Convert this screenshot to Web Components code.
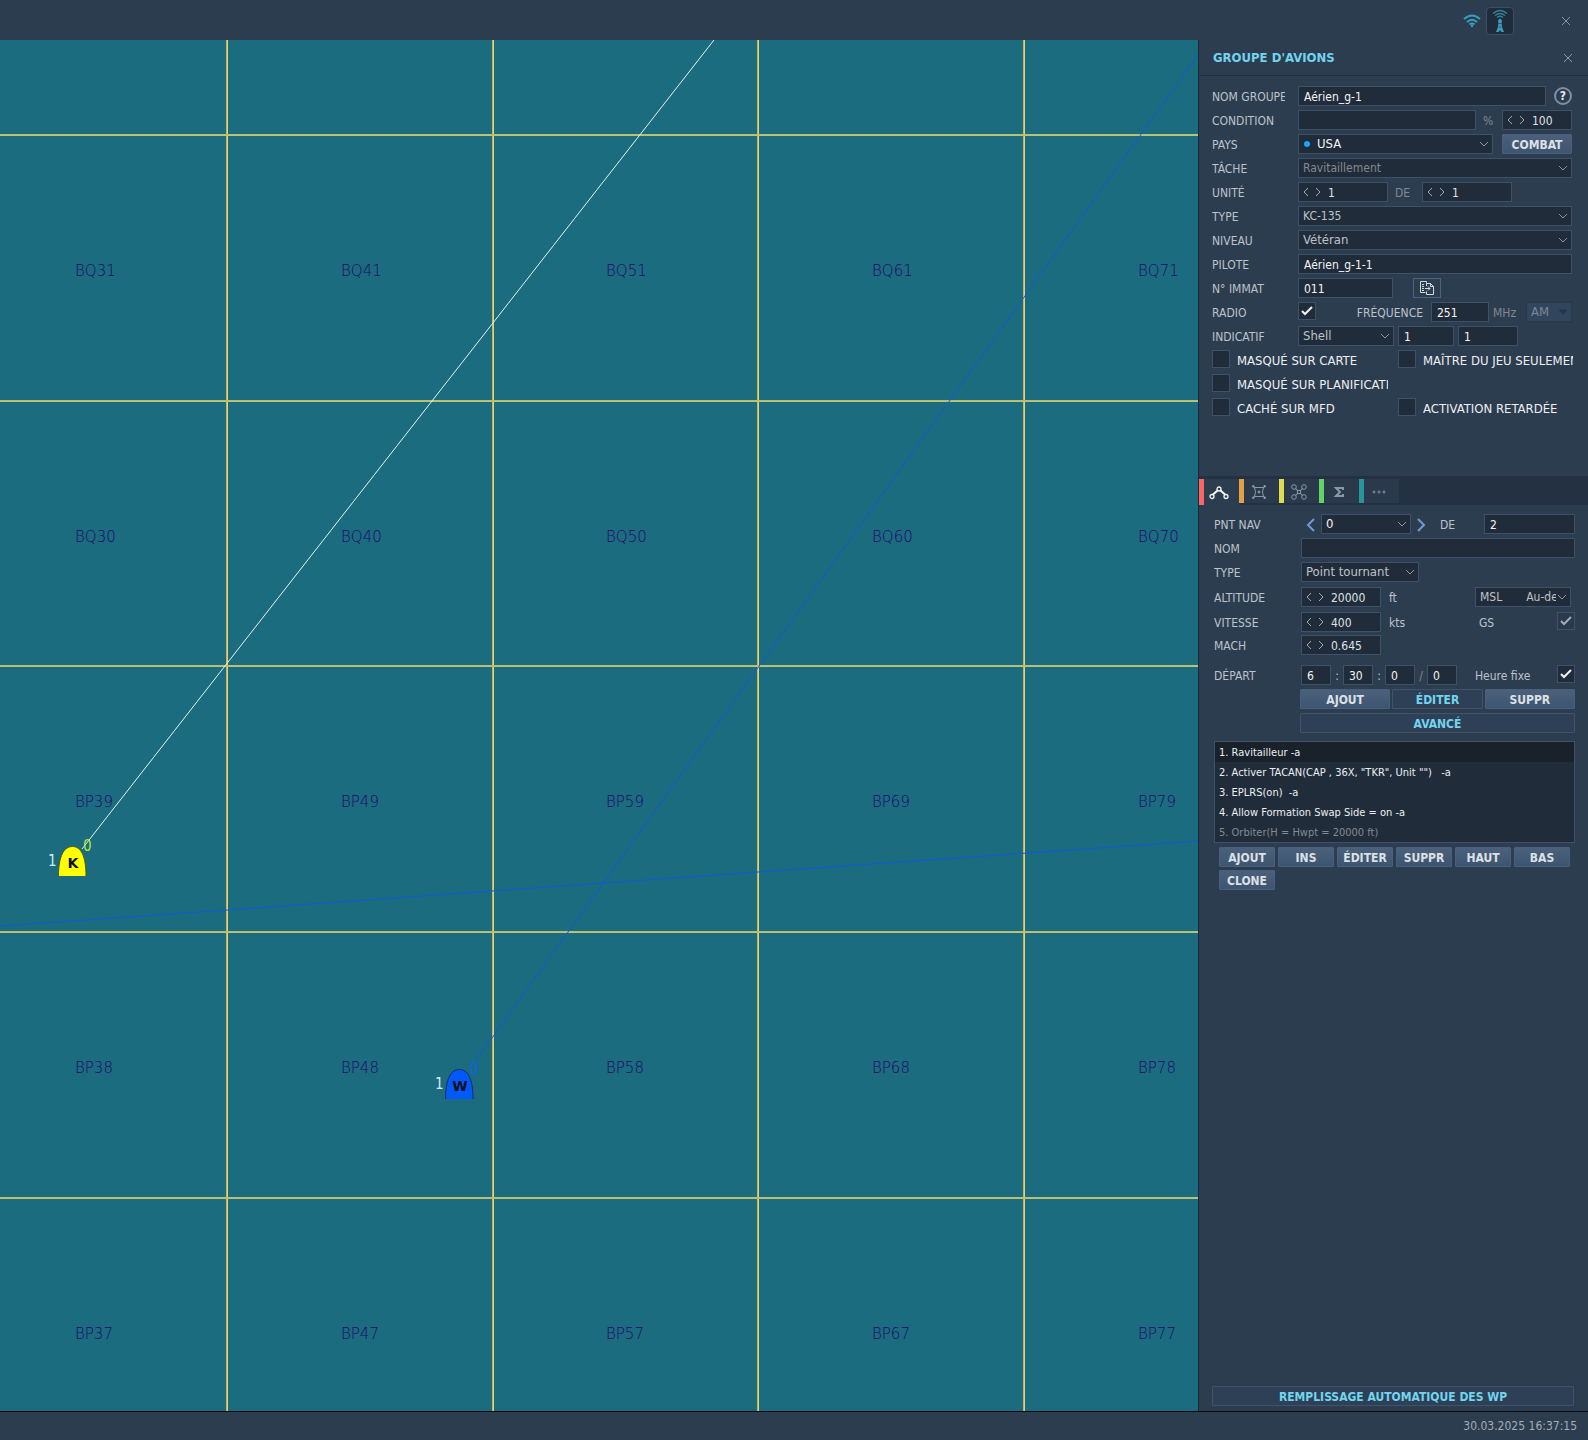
<!DOCTYPE html>
<html lang="fr">
<head>
<meta charset="utf-8">
<title>Groupe d'avions</title>
<style>
  html, body { height: 100%; margin: 0; }
  body {
    font: 12px/20px "DejaVu Sans Condensed", "DejaVu Sans", sans-serif;
    color: #bcc3ca;
    background: #2d3d50;
  }
</style>
</head>
<body>
<mission-editor></mission-editor>

<script>
// Rules that every shadow root starts with
const base = `
  * { box-sizing: border-box; }
  button, input, select { font: inherit; margin: 0; border-radius: 0; outline: none; }
  svg { display: block; fill: none; stroke: currentColor; }
`;

// Rules shared by the two forms of the side panel
const formStyles = `
  .row { display: grid; grid-template-columns: 86px 1fr; height: 20px; margin-bottom: 4px; line-height: 22px; }
  .row > div { display: flex; }
  .row > label, .row > .name { white-space: nowrap; overflow: hidden; margin-right: 13px; }
  .fill { flex: 1; min-width: 0; }
  .dim { color: #808890; }
  .push { margin-left: auto; }
  input {
    height: 20px;
    min-width: 0;
    padding: 1px 5px 0;
    border: 1px solid #3e5168;
    background: #212c3a;
    color: #f2f4f6;
  }
`;

function define(name, html, setup) {
  customElements.define(name, class extends HTMLElement {
    static formAssociated = true;

    constructor() {
      super();
      this.attachShadow({ mode: 'open', delegatesFocus: true });
      this.shadowRoot.innerHTML = `<style>${base}</style>${html}`;
    }

    connectedCallback() {
      if (setup && !this.ready) {
        this.ready = true;
        setup(this, this.shadowRoot);
      }
    }
  });
}

// Push button: default, or kind="flat"
define('ui-button', `
  <style>
    :host { display: block; height: 20px; }
    button {
      display: block;
      width: 100%;
      height: 100%;
      padding: 1px 0 0;
      border: 1px solid #48607c;
      border-radius: 1px;
      background: linear-gradient(#4a607b, #3e5571);
      color: #dde1e5;
      font-weight: bold;
      line-height: 18px;
      cursor: pointer;
    }
    :host([kind="flat"]) button { background: #2e4055; border-color: #3f536c; color: #72d4ee; }
  </style>
  <button type="button"><slot></slot></button>
`);

// Number box with its two step arrows
define('spin-box', `
  <style>
    :host { display: flex; height: 20px; border: 1px solid #3e5168; background: #212c3a; color: #a3abb4; }
    button { width: 12px; padding: 0 0 0 4px; border: 0; background: none; color: inherit; }
    input { flex: 1; min-width: 0; padding: 1px 0 0 5px; border: 0; background: none; color: #dfe3e6; }
  </style>
  <button type="button" aria-label="Moins"><svg width="6" height="10" viewBox="0 0 6 10"><path d="M5 1L1 5l4 4"/></svg></button>
  <button type="button" aria-label="Plus"><svg width="6" height="10" viewBox="0 0 6 10"><path d="M1 1l4 4-4 4"/></svg></button>
  <input type="text" inputmode="numeric">
`, (host, root) => {
  const input = root.querySelector('input');
  const [less, more] = root.querySelectorAll('button');
  input.value = host.getAttribute('value');
  input.setAttribute('aria-label', host.getAttribute('name'));
  less.addEventListener('click', () => { input.value = Number(input.value) - 1; });
  more.addEventListener('click', () => { input.value = Number(input.value) + 1; });
});

// Drop-down list
define('pick-box', `
  <style>
    :host { display: grid; height: 20px; color: #bcc3ca; }
    select {
      grid-area: 1 / 1;
      width: 100%;
      min-width: 0;
      height: 20px;
      padding: 0 14px 0 4px;
      appearance: none;
      border: 1px solid #3e5168;
      background: #212c3a;
      color: inherit;
      opacity: 1;
      font-size: 13px;
      line-height: 18px;
    }
    svg { grid-area: 1 / 1; place-self: center end; margin-right: 4px; color: #8c96a1; pointer-events: none; }
    i { display: none; grid-area: 1 / 1; place-self: center start; width: 6px; height: 6px; margin-left: 6px; border-radius: 50%; background: #18a8fb; pointer-events: none; }
    :host([dot]), :host([bright]) { color: #f2f4f6; }
    :host([dot]) select { padding-left: 18px; }
    :host([dot]) i { display: block; }
    :host([dim]) { color: #828990; }
    :host([plain]) select { background: #31465c; border-color: #25384c; color: #7b8896; }
    :host([plain]) svg { fill: #25384c; color: #25384c; }
    :host([plain]) svg path { d: path("M1 1h8l-4 4z"); }
    :host([small]) select { font-size: 12px; }
  </style>
  <select></select><i></i>
  <svg width="10" height="6" viewBox="0 0 10 6"><path d="M1 1l4 4 4-4"/></svg>
`, (host, root) => {
  const select = root.querySelector('select');
  select.setAttribute('aria-label', host.getAttribute('name'));
  select.append(new Option(host.getAttribute('value')));
  select.disabled = host.hasAttribute('dim') || host.hasAttribute('plain');
});

// Tick box
define('tick-box', `
  <style>
    :host { display: grid; width: 18px; height: 18px; flex: none; }
    input { grid-area: 1 / 1; width: 18px; height: 18px; appearance: none; border: 1px solid #3e5168; background: #212c3a; }
    svg { grid-area: 1 / 1; place-self: center; visibility: hidden; color: #f0f2f4; stroke-width: 2; pointer-events: none; }
    input:checked + svg { visibility: visible; }
    :host([dim]) input { background: #2a394b; }
    :host([dim]) svg { color: #a2abb5; }
  </style>
  <input type="checkbox"><svg width="12" height="10" viewBox="0 0 12 10"><path d="M1 5l3 3 7-7"/></svg>
`, (host, root) => {
  const input = root.querySelector('input');
  input.checked = host.hasAttribute('checked');
  input.setAttribute('aria-label', host.getAttribute('name'));
});

define('top-bar', `
  <style>
    :host { display: flex; align-items: center; justify-content: flex-end; height: 40px; padding: 2px 16px 0 0; box-sizing: border-box; background: #2d3d50; }
    button { display: grid; place-items: center; padding: 0; border: 1px solid transparent; background: none; color: #3a9fbd; }
    .wifi { width: 20px; margin-right: 4px; }
    .radio { width: 28px; height: 28px; border: 1px solid #3d4f64; border-radius: 4px; background: #212c3a; }
    .close { width: 12px; margin-left: 46px; color: #8995a1; }
  </style>
  <button class="wifi" type="button" aria-label="Réseau">
    <svg width="18" height="14" viewBox="0 0 18 14" stroke-width="2"><path d="M1 5Q9-2 17 5M4 8q5-4.500 10 0M6.500 10.500q2.500-2 5 0"/><circle cx="9" cy="12" r="1.200" fill="currentColor" stroke="none"/></svg>
  </button>
  <button class="radio" type="button" aria-label="Antenne">
    <svg width="16" height="24" viewBox="0 0 16 24" stroke-width="1.300">
      <path d="M1 4.500Q8-1.500 15 4.500M3 6.500q5-4 10 0M5 8.500q3-2.500 6 0" opacity=".75"/>
      <path d="M8 9.500l2 2-.5 3 1 5L12 23H9.500L8 21l-1.500 2H4l1.500-3.500 1-5-.5-3z" fill="currentColor" stroke="none"/>
      <path d="M6.500 14.500h3M6.500 18h3" stroke="#212c3a" stroke-width=".6"/>
    </svg>
  </button>
  <button class="close" type="button" aria-label="Fermer">
    <svg width="10" height="10" viewBox="0 0 10 10"><path d="M1 1l8 8M9 1L1 9"/></svg>
  </button>
`);

// The map: MGRS grid, routes and units on a free canvas
define('map-view', `
  <style>
    :host { display: block; overflow: hidden; background: #1a6c7e; }
    svg { width: 100%; height: 100%; stroke: none; }
    .grid path { stroke-width: 1; shape-rendering: crispEdges; }
    .names { font: 200 15px "DejaVu Sans Light", "DejaVu Sans", sans-serif; fill: #22056e; }
    .route { fill: none; stroke: #115ada; }
    .mark { font-size: 15px; fill: #d5edf0; }
    .type { font: bold 14px "DejaVu Sans", sans-serif; text-anchor: middle; }
  </style>
  <svg role="img" aria-label="Carte">
    <g class="grid"></g>
    <g class="names"></g>
    <path class="route" style="stroke: #e4f4f4" d="M82 809L714 0" />
    <path class="route" d="M474 1023L1198 15" />
    <path class="route" d="M0 886L228 870L492 851L758 832L1198 801" />
    <g class="units"></g>
  </svg>
`, (host, root) => {
  const cols = 5, rows = 5, step = 265.67;
  let lines = '', names = '';
  for (let c = 0; c < cols - 1; c++) {
    const x = Math.round(226 + c * step);
    lines += `<path stroke="#c9b45a" d="M${x}.5 0V2000"/><path stroke="#e0d27c" d="M${x + 1}.5 0V2000"/>`;
  }
  for (let r = 0; r < rows; r++) {
    const y = Math.round(94 + r * step);
    lines += `<path stroke="#b3bf75" d="M0 ${y}.5H2000"/><path stroke="#bfc272" d="M0 ${y + 1}.5H2000"/>`;
    for (let c = 0; c < cols; c++) {
      const zone = r < 2 ? 'BQ' : 'BP';
      const num = r < 2 ? 1 - r : 11 - r;
      names += `<text x="${Math.round(75 + c * step)}" y="${Math.round(236 + r * step)}">${zone}${c + 3}${num}</text>`;
    }
  }
  root.querySelector('.grid').innerHTML = lines;
  root.querySelector('.names').innerHTML = names;

  const units = [
    { x: 72, y: 806, type: 'K', fill: '#ffff00', edge: '#4c5a20', point: '#b7e632' },
    { x: 459, y: 1029, type: 'W', fill: '#0058ff', edge: '#122c5c', point: '#1260e6' },
  ];
  root.querySelector('.units').innerHTML = units.map(u => `
    <g transform="translate(${u.x} ${u.y})">
      <path d="M-13.500 30C-13.500 10-8 .5 .5 .5S14 10 14 30z" fill="${u.fill}"/>
      <path d="M-13.500 30C-13.500 10-8 .5 .5 .5S14 10 14 30" fill="none" stroke="${u.edge}"/>
      <text class="type" x="1" y="22" fill="#0a0f14">${u.type}</text>
      <text class="mark" x="-24" y="20">1</text>
      <text class="mark" x="11" y="5" style="fill: ${u.point}">0</text>
    </g>`).join('');
});

// Upper form: the group and its lead unit
define('group-form', `
  <style>
    ${formStyles}
    :host { display: block; height: 400px; box-sizing: border-box; padding: 10px 16px 0 13px; }
    .help { width: 18px; height: 18px; margin: 1px 0 0 8px; padding: 0; border: 2px solid #7d8fa3; border-radius: 50%; background: none; color: #e8ebee; font-weight: bold; line-height: 14px; }
    .copy { display: grid; place-items: center; width: 28px; height: 20px; padding: 0; border: 1px solid #4a6583; background: #2d3d50; color: #d4d9de; }
    .options { display: grid; grid-template-columns: 186px 1fr; gap: 6px 0; margin-right: -1px; color: #eceff1; font-size: 13px; line-height: 22px; }
    .options > div { display: grid; grid-template-columns: 18px 1fr; gap: 7px; height: 18px; margin-right: 10px; }
    .options > .end { margin-right: 0; }
    .options label { overflow: hidden; white-space: nowrap; }
  </style>
  <div class="row"><label for="group">NOM GROUPE</label><div>
    <input id="group" class="fill" value="Aérien_g-1"><button class="help" type="button" aria-label="Aide">?</button></div></div>
  <div class="row"><label for="cond">CONDITION</label><div>
    <input id="cond" class="fill"><span class="dim" style="width: 26px; padding-left: 7px">%</span>
    <spin-box name="Pourcentage" value="100" style="width: 70px"></spin-box></div></div>
  <div class="row"><label for="country">PAYS</label><div>
    <pick-box id="country" class="fill" dot name="PAYS" value="USA"></pick-box><ui-button style="width: 70px; margin-left: 9px">COMBAT</ui-button></div></div>
  <div class="row"><label for="task">TÂCHE</label><div><pick-box id="task" class="fill" dim small name="TÂCHE" value="Ravitaillement"></pick-box></div></div>
  <div class="row"><label for="unit">UNITÉ</label><div>
    <spin-box id="unit" name="UNITÉ" value="1" style="width: 90px"></spin-box>
    <label class="dim" for="units" style="width: 34px; padding-left: 7px">DE</label>
    <spin-box id="units" name="DE" value="1" style="width: 90px"></spin-box></div></div>
  <div class="row"><label for="type">TYPE</label><div><pick-box id="type" class="fill" small name="TYPE" value="KC-135"></pick-box></div></div>
  <div class="row"><label for="skill">NIVEAU</label><div><pick-box id="skill" class="fill" name="NIVEAU" value="Vétéran"></pick-box></div></div>
  <div class="row"><label for="pilot">PILOTE</label><div><input id="pilot" class="fill" value="Aérien_g-1-1"></div></div>
  <div class="row"><label for="tail">N° IMMAT</label><div>
    <input id="tail" value="011" style="width: 95px; margin-right: 20px">
    <button class="copy" type="button" aria-label="Copier">
      <svg width="16" height="16" viewBox="0 0 16 16"><path d="M6.500 12.500h-5v-11h6v2M3 4.500h2M3 6.500h2M3 8.500h2M3 10.500h2M7.500 6V3.500h4l3 3v8h-7v-3M11.500 3.500v3h3M6 8.500h5M9 6.500l2 2-2 2"/></svg>
    </button></div></div>
  <div class="row"><label for="radio">RADIO</label><div>
    <tick-box id="radio" checked name="RADIO"></tick-box>
    <label class="push" for="freq">FRÉQUENCE</label>
    <input id="freq" value="251" style="width: 58px; margin-left: 8px"><span class="dim" style="width: 37px; padding-left: 4px">MHz</span>
    <pick-box plain name="Modulation" value="AM" style="width: 46px"></pick-box></div></div>
  <div class="row"><label for="sign">INDICATIF</label><div style="gap: 4px">
    <pick-box id="sign" name="INDICATIF" value="Shell" style="width: 96px"></pick-box>
    <input aria-label="Patrouille" value="1" style="width: 56px">
    <input aria-label="Avion" value="1" style="width: 60px"></div></div>
  <div class="options">
    <div><tick-box id="map" name="MASQUÉ SUR CARTE"></tick-box><label for="map">MASQUÉ SUR CARTE</label></div>
    <div class="end"><tick-box id="gm" name="MAÎTRE DU JEU SEULEMENT"></tick-box><label for="gm">MAÎTRE DU JEU SEULEMENT</label></div>
    <div><tick-box id="plan" name="MASQUÉ SUR PLANIFICATION"></tick-box><label for="plan">MASQUÉ SUR PLANIFICATION</label></div>
    <span></span>
    <div><tick-box id="mfd" name="CACHÉ SUR MFD"></tick-box><label for="mfd">CACHÉ SUR MFD</label></div>
    <div class="end"><tick-box id="late" name="ACTIVATION RETARDÉE"></tick-box><label for="late">ACTIVATION RETARDÉE</label></div>
  </div>
`);

define('panel-tabs', `
  <style>
    :host { display: flex; height: 29px; padding-top: 3px; box-sizing: border-box; background: #233142; }
    button { display: grid; place-items: center; width: 40px; height: 24px; padding: 1px 6px 0 0; border: 0; border-left: 5px solid var(--c); background: #2a394b; color: #8b97a3; }
    button.on { height: 26px; background: #2d3d50; color: #f4f6f7; }
  </style>
  <button class="on" type="button" aria-label="Route" style="--c: #fb6567">
    <svg width="20" height="14" viewBox="0 0 20 14" stroke-width="1.300"><circle cx="3" cy="10.500" r="2"/><circle cx="10" cy="3" r="2"/><circle cx="17" cy="10.500" r="2"/><path stroke-width="2" d="M4 8.500l4.500-4M16 8.500l-4.500-4"/></svg>
  </button>
  <button type="button" aria-label="Cible" style="--c: #e5a045">
    <svg width="16" height="16" viewBox="0 0 16 16"><path d="M3.500 3.500h9M3.500 12.500h9M3.500 3.500Q5.500 8 3.500 12.500M12.500 3.500Q10.500 8 12.500 12.500"/><path stroke-width="1.500" d="M1 2.500h1.500V1M15 2.500h-1.500V1M1 13.500h1.500V15M15 13.500h-1.500V15M2 2l2 2M14 2l-2 2M2 14l2-2M14 14l-2-2"/><circle cx="8" cy="8" r="1" fill="currentColor"/></svg>
  </button>
  <button type="button" aria-label="Chargement" style="--c: #dfdc51">
    <svg width="16" height="16" viewBox="0 0 16 16"><circle cx="3" cy="3" r="2.300"/><circle cx="13" cy="3" r="2.300"/><circle cx="3" cy="13" r="2.300"/><circle cx="13" cy="13" r="2.300"/><path d="M4.500 5l2 1.500v3l-2 1.500M11.500 5l-2 1.500v3l2 1.500M5 4.500l1.500 2h3l1.500-2M5 11.500l1.500-2h3l1.500 2"/></svg>
  </button>
  <button type="button" aria-label="Résumé" style="--c: #62d464">
    <svg width="12" height="12" viewBox="0 0 12 12" stroke-width="2"><path d="M10 4V2H3l4 4-4 4h7V8"/></svg>
  </button>
  <button type="button" aria-label="Plus" style="--c: #27969b">
    <svg width="14" height="4" viewBox="0 0 14 4"><circle cx="2" cy="2" r="1"/><circle cx="7" cy="2" r="1"/><circle cx="12" cy="2" r="1"/></svg>
  </button>
`);

// Lower form: the selected waypoint
define('waypoint-form', `
  <style>
    ${formStyles}
    :host { display: block; padding: 9px 13px 0 15px; }
    .row { grid-template-columns: 87px 1fr; }
    .step { width: 20px; padding: 0 5px; border: 0; background: none; color: #6f9bd0; }
    .step svg { stroke-width: 2; }
    .unit { flex: 1; padding-left: 8px; }
    .side { display: flex; justify-content: space-between; width: 100px; }
    .time input { width: 30px; }
    .time span { width: 12px; text-align: center; }
    .bar { display: grid; grid-template-columns: repeat(3, 1fr); gap: 4px 2px; margin-left: 86px; }
    .wide { grid-column: 1 / -1; }
  </style>
  <div class="row"><label for="wp">PNT NAV</label><div>
    <button class="step" type="button" aria-label="Précédent"><svg width="10" height="14" viewBox="0 0 10 14"><path d="M8 1L2 7l6 6"/></svg></button>
    <pick-box id="wp" bright name="PNT NAV" value="0" style="width: 90px"></pick-box>
    <button class="step" type="button" aria-label="Suivant"><svg width="10" height="14" viewBox="0 0 10 14"><path d="M2 1l6 6-6 6"/></svg></button>
    <label for="count" style="margin-left: 9px">DE</label>
    <input id="count" class="push" value="2" style="width: 91px"></div></div>
  <div class="row"><label for="name">NOM</label><div><input id="name" class="fill"></div></div>
  <div class="row" style="margin-bottom: 5px"><label for="kind">TYPE</label><div><pick-box id="kind" name="TYPE" value="Point tournant" style="width: 118px"></pick-box></div></div>
  <div class="row" style="margin-bottom: 5px"><label for="alt">ALTITUDE</label><div>
    <spin-box id="alt" name="ALTITUDE" value="20000" style="width: 80px"></spin-box><span class="unit">ft</span>
    <div class="side"><pick-box small name="Référence" value="MSL&nbsp;&nbsp;&nbsp;&nbsp;&nbsp;&nbsp;&nbsp;Au-dessus" style="width: 96px"></pick-box></div></div></div>
  <div class="row" style="margin-bottom: 3px"><label for="speed">VITESSE</label><div>
    <spin-box id="speed" name="VITESSE" value="400" style="width: 80px"></spin-box><span class="unit">kts</span>
    <div class="side"><label for="gs" style="padding-left: 4px">GS</label><tick-box id="gs" checked dim name="GS"></tick-box></div></div></div>
  <div class="row" style="margin-bottom: 10px"><label for="mach">MACH</label><div>
    <spin-box id="mach" name="MACH" value="0.645" style="width: 80px"></spin-box></div></div>
  <div class="row"><span class="name">DÉPART</span><div class="time">
    <input aria-label="Heures" value="6"><span>:</span><input aria-label="Minutes" value="30"><span>:</span><input aria-label="Secondes" value="0"><span class="dim">/</span><input aria-label="Jours" value="0">
    <div class="side push"><label for="fixed">Heure fixe</label><tick-box id="fixed" checked name="Heure fixe"></tick-box></div></div></div>
  <div class="bar">
    <ui-button>AJOUT</ui-button><ui-button kind="flat">ÉDITER</ui-button><ui-button>SUPPR</ui-button>
    <ui-button class="wide" kind="flat">AVANCÉ</ui-button>
  </div>
`);

define('task-list', `
  <style>
    :host { display: block; padding: 8px 13px 0 15px; }
    ol { margin: 0; padding: 0; border: 1px solid #3e5168; background: #212c3a; color: #eceff1; font-size: 11px; list-style: none; white-space: pre; }
    li { height: 20px; padding-left: 4px; line-height: 22px; }
    li:first-child { background: #19212b; }
    li:last-child { color: #828a92; }
    div { display: grid; grid-template-columns: repeat(6, 1fr); gap: 3px; padding: 4px 5px 0; }
  </style>
  <ol><li>1. Ravitailleur -a</li><li>2. Activer TACAN(CAP , 36X, "TKR", Unit "")   -a</li><li>3. EPLRS(on)  -a</li><li>4. Allow Formation Swap Side = on -a</li><li>5. Orbiter(H = Hwpt = 20000 ft)</li></ol>
  <div><ui-button>AJOUT</ui-button><ui-button>INS</ui-button><ui-button>ÉDITER</ui-button><ui-button>SUPPR</ui-button><ui-button>HAUT</ui-button><ui-button>BAS</ui-button><ui-button>CLONE</ui-button></div>
`);

define('side-panel', `
  <style>
    :host { display: flex; flex-direction: column; border-left: 1px solid #1b2a38; background: #2d3d50; }
    header { display: flex; align-items: center; justify-content: space-between; height: 36px; padding: 1px 15px 0 14px; border-bottom: 1px solid #223041; }
    h1 { margin: 0; color: #72d4ee; font-size: 13px; }
    header button { padding: 0; border: 0; background: none; color: #8995a1; }
    .auto { margin: auto 14px 5px 13px; }
  </style>
  <header><h1><slot></slot></h1><button type="button" aria-label="Fermer"><svg width="10" height="10" viewBox="0 0 10 10"><path d="M1 1l8 8M9 1L1 9"/></svg></button></header>
  <group-form></group-form>
  <panel-tabs></panel-tabs>
  <waypoint-form></waypoint-form>
  <task-list></task-list>
  <ui-button class="auto" kind="flat">REMPLISSAGE AUTOMATIQUE DES WP</ui-button>
`);

define('mission-editor', `
  <style>
    :host { display: grid; grid-template: auto 1fr 29px / 1fr 390px; height: 100%; }
    top-bar, footer { grid-column: 1 / -1; }
    map-view { min-width: 0; min-height: 0; }
    footer { padding: 4px 11px 0; border-top: 1px solid #070b10; background: #2d3d50; color: #a4acb5; text-align: right; }
  </style>
  <top-bar></top-bar>
  <map-view></map-view>
  <side-panel>GROUPE D'AVIONS</side-panel>
  <footer>30.03.2025 16:37:15</footer>
`);
</script>
</body>
</html>
